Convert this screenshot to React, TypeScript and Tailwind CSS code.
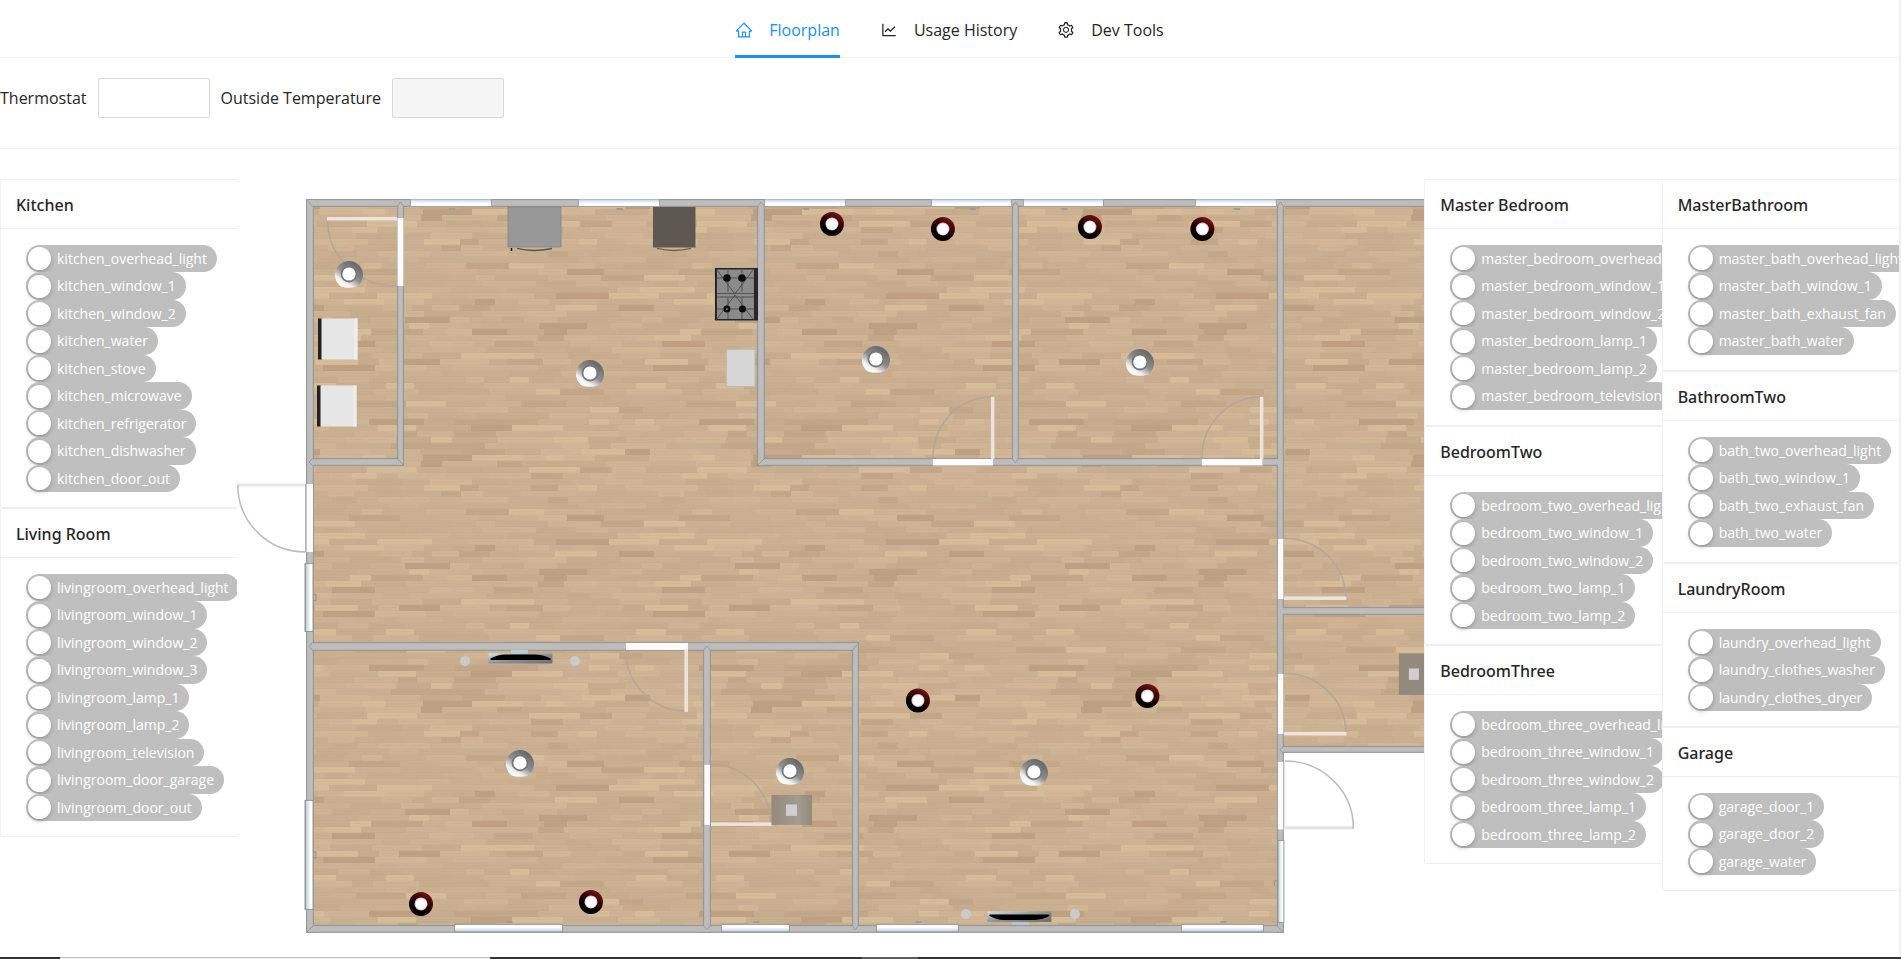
import { useState } from "react";
import { AiOutlineHome, AiOutlineLineChart, AiOutlineSetting } from "react-icons/ai";

type Room = { name: string; devices: string[] };

const leftRooms: Room[] = [
  {
    name: "Kitchen",
    devices: [
      "kitchen_overhead_light",
      "kitchen_window_1",
      "kitchen_window_2",
      "kitchen_water",
      "kitchen_stove",
      "kitchen_microwave",
      "kitchen_refrigerator",
      "kitchen_dishwasher",
      "kitchen_door_out",
    ],
  },
  {
    name: "Living Room",
    devices: [
      "livingroom_overhead_light",
      "livingroom_window_1",
      "livingroom_window_2",
      "livingroom_window_3",
      "livingroom_lamp_1",
      "livingroom_lamp_2",
      "livingroom_television",
      "livingroom_door_garage",
      "livingroom_door_out",
    ],
  },
];

const bedrooms: Room[] = [
  {
    name: "Master Bedroom",
    devices: [
      "master_bedroom_overhead_light",
      "master_bedroom_window_1",
      "master_bedroom_window_2",
      "master_bedroom_lamp_1",
      "master_bedroom_lamp_2",
      "master_bedroom_television",
    ],
  },
  {
    name: "BedroomTwo",
    devices: [
      "bedroom_two_overhead_light",
      "bedroom_two_window_1",
      "bedroom_two_window_2",
      "bedroom_two_lamp_1",
      "bedroom_two_lamp_2",
    ],
  },
  {
    name: "BedroomThree",
    devices: [
      "bedroom_three_overhead_light",
      "bedroom_three_window_1",
      "bedroom_three_window_2",
      "bedroom_three_lamp_1",
      "bedroom_three_lamp_2",
    ],
  },
];

const otherRooms: Room[] = [
  {
    name: "MasterBathroom",
    devices: [
      "master_bath_overhead_light",
      "master_bath_window_1",
      "master_bath_exhaust_fan",
      "master_bath_water",
    ],
  },
  {
    name: "BathroomTwo",
    devices: [
      "bath_two_overhead_light",
      "bath_two_window_1",
      "bath_two_exhaust_fan",
      "bath_two_water",
    ],
  },
  {
    name: "LaundryRoom",
    devices: ["laundry_overhead_light", "laundry_clothes_washer", "laundry_clothes_dryer"],
  },
  { name: "Garage", devices: ["garage_door_1", "garage_door_2", "garage_water"] },
];

function DeviceSwitch({ name }: { name: string }) {
  const [on, setOn] = useState(false);
  return (
    <li className="flex odd:h-[27px] even:h-7">
      <button
        type="button"
        role="switch"
        aria-checked={on}
        onClick={() => setOn(!on)}
        className={
          on
            ? "flex h-full shrink-0 items-center gap-[6px] rounded-full bg-[#1890ff] pr-[10px] pl-[2px] text-[14px] leading-5 whitespace-nowrap text-white"
            : "flex h-full shrink-0 items-center gap-[6px] rounded-full bg-[#bfbfbf] pr-[10px] pl-[2px] text-[14px] leading-5 whitespace-nowrap text-white"
        }
      >
        <span className="size-[23px] rounded-full bg-white shadow-[0_2px_4px_rgba(0,35,11,0.25)]" />
        {name}
      </button>
    </li>
  );
}

function RoomColumn({ rooms }: { rooms: Room[] }) {
  return (
    <div className="min-w-0 overflow-hidden">
      {rooms.map((room) => (
        <section
          key={room.name}
          className="rounded-l-xs border-y border-l border-[#f0f0f0] bg-white"
        >
          <h2 className="flex h-[49px] items-center border-b border-[#f0f0f0] px-[15px] pt-[2px] font-['Noto_Sans','Open_Sans',sans-serif] text-[16px] font-medium">
            {room.name}
          </h2>
          <ul className="pt-4 pb-[15px] pl-[25px]">
            {room.devices.map((device) => (
              <DeviceSwitch key={device} name={device} />
            ))}
          </ul>
        </section>
      ))}
    </div>
  );
}

type Plank = { x: number; y: number; w: number; color: string };

const TILE_W = 330;
const TILE_H = 246;

function layPlanks(): Plank[] {
  const tones = [
    "#ceb395", "#cab092", "#c7ac8e", "#ccb193", "#c8ad8e", "#d0b596", "#c2a788",
    "#cbb092", "#d6bc99", "#c9ae90", "#cdb394", "#bda182", "#d2b797", "#caaf91",
  ];
  const planks: Plank[] = [];
  let seed = 4127;
  const next = () => {
    seed = (seed * 16807) % 2147483647;
    return seed / 2147483647;
  };
  for (let y = 0; y < TILE_H; y += 6) {
    const start = Math.floor(next() * TILE_W);
    let laid = 0;
    while (laid < TILE_W) {
      let w = 18 + Math.floor(next() * 38);
      if (TILE_W - laid - w < 18) w = TILE_W - laid;
      const x = (start + laid) % TILE_W;
      const color = tones[Math.floor(next() * tones.length)];
      planks.push({ x, y, w, color });
      if (x + w > TILE_W) planks.push({ x: x - TILE_W, y, w, color });
      laid += w;
    }
  }
  return planks;
}

const planks = layPlanks();

type Box = [x: number, y: number, w: number, h: number];

const floors: Box[] = [
  [310, 203, 971, 726],
  [1281, 203, 160, 546],
];

const walls: Box[] = [
  [306, 199, 1130, 8],
  [306, 199, 8, 734],
  [306, 925, 978, 8],
  [1277, 199, 7, 734],
  [397, 199, 7, 267],
  [306, 458, 98, 8],
  [757, 199, 8, 267],
  [1012, 199, 7, 267],
  [757, 458, 527, 8],
  [306, 642, 553, 9],
  [703, 642, 8, 291],
  [852, 642, 7, 291],
  [1277, 607, 160, 8],
  [1277, 746, 160, 7],
];

const topWindows = [
  [410, 82], [578, 82], [764, 82], [931, 81], [1023, 81], [1195, 82],
];
const bottomWindows = [
  [454, 109], [721, 69], [876, 83], [1181, 83],
];

const doorways: Box[] = [
  [397.5, 218, 6, 68],
  [306.5, 484, 6.5, 68],
  [933, 459, 60, 6.5],
  [1202, 459, 60.5, 6.5],
  [626, 643, 62, 7],
  [704.5, 765, 5.5, 60],
  [1278, 539, 5.5, 60],
  [1278, 674, 5.5, 60],
  [1278, 762, 5.5, 67.5],
];

const leaves: Box[] = [
  [327, 217, 70, 3.5],
  [991, 397, 3.5, 62],
  [1260, 397, 3.5, 62],
  [684.5, 650, 3.5, 62],
  [711, 822.5, 61, 3.5],
  [1284, 596.5, 62.5, 3.5],
  [1284, 732, 62.5, 3.5],
];

const arcs = [
  "M327.5 221A69 66 0 0 0 397 286",
  "M933 458A59 61 0 0 1 991 397",
  "M1202 458A59 61 0 0 1 1260 397",
  "M626 651A60 60 0 0 0 685 711",
  "M711 764.5A60 60 0 0 1 771 823",
  "M1285 538.5A61 60 0 0 1 1346 597",
  "M1285 673.5A61 60 0 0 1 1346 732",
];

const outerArcs = ["M237.8 485A67 67 0 0 0 305 552", "M1285 761A68.5 67 0 0 1 1353.5 829"];

const ceilingLights = [
  [349, 274], [590, 373], [876, 359], [1140, 362], [520, 763], [790, 771], [1034, 772],
];

const lamps = [
  [832, 224], [943, 229], [1090, 227], [1202.5, 229],
  [918, 700.5], [1147.5, 696], [421, 904], [591, 902],
];

const speakers = [[465, 661], [575, 661], [966, 914], [1075, 914]];

function Floorplan() {
  return (
    <svg viewBox="237 179 1187 770" className="block h-auto w-full" role="img" aria-label="Floorplan">
      <defs>
        <pattern id="wood" x="310" y="203" width={TILE_W} height={TILE_H} patternUnits="userSpaceOnUse">
          <rect width={TILE_W} height={TILE_H} fill="#cab092" />
          {planks.map((p) => (
            <g key={`${p.x}-${p.y}`}>
              <rect x={p.x} y={p.y} width={p.w} height={6} fill={p.color} />
              <rect x={p.x + 3} y={p.y + 2} width={p.w * 0.7} height={1} fill="#a98a68" opacity={0.07} />
              <rect x={p.x} y={p.y + 5} width={p.w} height={1} fill="#a98a68" opacity={0.08} />
            </g>
          ))}
        </pattern>
        <linearGradient id="ceiling" x1="0.75" y1="0.1" x2="0.2" y2="0.9">
          <stop offset="0" stopColor="#686868" />
          <stop offset="0.5" stopColor="#8f8f8f" />
          <stop offset="0.82" stopColor="#f0f0f0" />
          <stop offset="1" stopColor="#ffffff" />
        </linearGradient>
        <linearGradient id="shade" x1="0.7" y1="0.1" x2="0.35" y2="0.75">
          <stop offset="0" stopColor="#6b1012" />
          <stop offset="0.5" stopColor="#2c0506" />
          <stop offset="1" stopColor="#000000" />
        </linearGradient>
        <linearGradient id="glassDown" x1="0" y1="0" x2="0" y2="1">
          <stop offset="0" stopColor="#bcd7e0" />
          <stop offset="0.6" stopColor="#ffffff" />
        </linearGradient>
        <linearGradient id="glassUp" x1="0" y1="1" x2="0" y2="0">
          <stop offset="0" stopColor="#bcd3dc" />
          <stop offset="0.6" stopColor="#ffffff" />
        </linearGradient>
        <linearGradient id="glassSide" x1="0" y1="0" x2="1" y2="0">
          <stop offset="0" stopColor="#bcd3dc" />
          <stop offset="0.7" stopColor="#ffffff" />
        </linearGradient>
        <linearGradient id="metal" x1="0" y1="0" x2="1" y2="1">
          <stop offset="0" stopColor="#d5e0e6" />
          <stop offset="0.5" stopColor="#8d9296" />
          <stop offset="1" stopColor="#6b6b6b" />
        </linearGradient>
        <linearGradient id="basin" x1="0" y1="0" x2="1" y2="0">
          <stop offset="0" stopColor="#95897c" />
          <stop offset="0.65" stopColor="#a39c92" />
          <stop offset="1" stopColor="#94887b" />
        </linearGradient>
      </defs>

      {floors.map(([x, y, w, h]) => (
        <rect key={`${x}-${y}`} x={x} y={y} width={w} height={h} fill="url(#wood)" />
      ))}

      <g fill="#989898">
        {walls.map(([x, y, w, h]) => (
          <rect key={`${x}-${y}-${w}`} x={x} y={y} width={w} height={h} />
        ))}
      </g>
      <g fill="#bdbdbd">
        {walls.map(([x, y, w, h]) => (
          <rect key={`${x}-${y}-${w}`} x={x + 1.2} y={y + 1.2} width={w - 2.4} height={h - 2.4} />
        ))}
      </g>
      <path
        d="M306 199l7 8M306 933l7-7M1284 933l-7-7M404 466l-7-8M757 466l8-8M859 642l-7 9M397 207l3.500-5 3.500 5M757 207l4-5 4 5M1012 207l3.500-5 3.500 5M1277 207l3.500-5 3.500 5M1012 458l3.500 5 3.500-5M313 458l-4 4 4 4M313 642l-4 4.500 4 4.500M703 651l4-5 4 5M703 925l4 5 4-5M852 925l3.500 5 3.500-5M1284 746l-4 4 4 4"
        fill="none"
        stroke="#999999"
        strokeWidth="1"
      />

      {topWindows.map(([x, w]) => (
        <g key={x}>
          <rect x={x} y={199} width={w} height={8} fill="#9fa3a5" />
          <rect x={x + 1} y={199.5} width={w - 2} height={6.5} fill="url(#glassDown)" />
          <path d={`M${x + w / 2 - 3} 208h7v2h-5z`} fill="#a39a90" />
        </g>
      ))}
      {bottomWindows.map(([x, w]) => (
        <g key={x}>
          <rect x={x} y={924} width={w} height={8.5} fill="#94989a" />
          <rect x={x + 1} y={925} width={w - 2} height={6.5} fill="url(#glassUp)" />
          <path d={`M${x + w / 2 - 3} 923h7v-2h-5z`} fill="#a39a90" />
        </g>
      ))}
      {[[563, 69], [800, 110]].map(([y, h]) => (
        <g key={y}>
          <rect x={304.5} y={y} width={9} height={h} fill="#94989a" />
          <rect x={306} y={y + 1} width={6.5} height={h - 2} fill="url(#glassSide)" />
          <path d={`M313 ${y + h / 2 - 3}h3v6h-3`} fill="none" stroke="#8f8f8f" />
        </g>
      ))}
      <rect x={1277} y={840} width={7.5} height={83} fill="#94989a" />
      <rect x={1278.5} y={841} width={5} height={81} fill="url(#glassSide)" />
      <path d="M1277 881h-2.500v5" fill="none" stroke="#8f8f8f" />

      {doorways.map(([x, y, w, h]) => (
        <rect key={`${x}-${y}`} x={x} y={y} width={w} height={h} fill="#fbfbfb" />
      ))}
      <path d="M305.500 484v68M1284 762v67" stroke="#b0b0b0" />
      <g fill="none" stroke="#b0a89e" strokeWidth="1.500">
        {arcs.map((d) => (
          <path key={d} d={d} />
        ))}
      </g>
      {leaves.map(([x, y, w, h]) => (
        <rect key={`${x}-${y}`} x={x} y={y} width={w} height={h} fill="#eae5df" />
      ))}
      <rect x={237} y={483.5} width={68} height={3} fill="#e8e8e8" />
      <rect x={1284} y={826.5} width={69.5} height={3} fill="#e3e3e3" />
      <g fill="none" stroke="#bcbcbc" strokeWidth="1.500">
        {outerArcs.map((d) => (
          <path key={d} d={d} />
        ))}
      </g>

      {/* refrigerator and microwave */}
      <rect x={508} y={207} width={53} height={40} fill="#989898" stroke="#858585" strokeWidth="0.800" />
      <path d="M511.500 248v3" stroke="#111111" strokeWidth="1.500" />
      <path d="M517 248.500q16 4 35 0" fill="none" stroke="#555555" strokeWidth="1.300" />
      <rect x={653} y={207} width={42.5} height={40.5} fill="#5d5852" />
      <path d="M657 248.500q17 4 34 0" fill="none" stroke="#6b625a" strokeWidth="1.300" />

      {/* stove */}
      <rect x={715} y={268} width={43} height={52.5} fill="#262626" />
      <rect x={717} y={269.5} width={37} height={49.5} fill="#8b8b8b" />
      <path
        d="M717 293.500h37M717 297h37M728 270v22M742 270v22M728 298v21M742 298v21M717 278h37M717 309h37M717 270l18 24 18-24M717 319l18-24 18 24"
        stroke="#4b4b4b"
        strokeWidth="0.900"
        fill="none"
      />
      <g fill="#0d0d0d">
        <circle cx={727} cy={278} r={3.8} />
        <circle cx={742} cy={278} r={3.8} />
        <circle cx={742.5} cy={309} r={3.5} />
        <circle cx={727} cy={309} r={3.5} />
      </g>
      <circle cx={727} cy={309} r={1} fill="#7a7a7a" />

      {/* dishwasher, washer and dryer */}
      <rect x={726.5} y={349.5} width={28.5} height={37} fill="#d6d6d6" stroke="#c0b8ae" strokeWidth="0.800" />
      <rect x={318} y={318.5} width={4} height={41} fill="#222222" />
      <rect x={321.5} y={318.5} width={36} height={41} fill="#e6e6e6" />
      <rect x={354} y={318.5} width={3.5} height={41} fill="#efede9" />
      <rect x={317} y={385.5} width={4} height={41} fill="#222222" />
      <rect x={320.5} y={385.5} width={36} height={41} fill="#e6e6e6" />
      <rect x={353} y={385.5} width={3.5} height={41} fill="#efede9" />

      {/* televisions */}
      <rect x={511} y={650} width={17} height={5} fill="#b9cbd4" />
      <rect x={488.5} y={653.5} width={64} height={10} fill="url(#metal)" />
      <path d="M490.500 660v-1.500q8-4 14-4h31q9 .5 15 4v1.500z" fill="#000000" />
      <rect x={1012} y={920} width={17} height={5} fill="#b9c3c9" />
      <rect x={987.5} y={911.5} width={64} height={10.5} fill="url(#metal)" />
      <path d="M989.500 914.500v1.500q8 4 14 4h31q9-.5 15-4v-1.500z" fill="#000000" />
      {speakers.map(([x, y]) => (
        <circle key={`${x}-${y}`} cx={x} cy={y} r={5} fill="#cbcbcb" />
      ))}

      {/* sinks */}
      <rect x={771.5} y={795} width={40.5} height={30} fill="url(#basin)" />
      <rect x={786} y={804.5} width={11} height={11.5} fill="#cfcfcf" />
      <rect x={1399} y={653.5} width={40} height={41.5} fill="#93897d" />
      <rect x={1409} y={668.5} width={10} height={11.5} fill="#cfcfcf" />

      {ceilingLights.map(([x, y]) => (
        <g key={`${x}-${y}`}>
          <path
            d={`M${x - 8} ${y + 12.5}A14 14 0 1 1 ${x + 8} ${y + 12.5}Q${x} ${y + 15} ${x - 8} ${y + 12.5}z`}
            fill="url(#ceiling)"
          />
          <circle cx={x} cy={y} r={7.5} fill="#ffffff" stroke="#777777" strokeWidth="1.800" />
        </g>
      ))}
      {lamps.map(([x, y]) => (
        <g key={`${x}-${y}`}>
          <circle cx={x} cy={y} r={12} fill="url(#shade)" />
          <circle cx={x} cy={y} r={6.5} fill="#d9c8c8" />
          <circle cx={x} cy={y} r={5.5} fill="#ffffff" />
        </g>
      ))}
    </svg>
  );
}

const tabs = [
  { label: "Floorplan", Icon: AiOutlineHome },
  { label: "Usage History", Icon: AiOutlineLineChart },
  { label: "Dev Tools", Icon: AiOutlineSetting },
];

export default function App() {
  return (
    <div className="flex min-h-screen flex-col bg-white font-['Open_Sans','Noto_Sans',sans-serif] text-[#262626]">
      <div className="grow border-r-2 border-[#f0f0f0]">
        <nav className="flex justify-center gap-10 border-b border-[#f0f0f0]">
          {tabs.map(({ label, Icon }, i) => (
            <a
              key={label}
              href="#"
              aria-current={i === 0 ? "page" : undefined}
              className={
                i === 0
                  ? "-mb-px flex h-[58px] items-center gap-4 border-b-3 border-[#1890ff] pt-1 text-[16px] text-[#1890ff]"
                  : "-mb-px flex h-[58px] items-center gap-4 border-b-3 border-transparent pt-1 text-[16px]"
              }
            >
              <Icon className="size-[18px]" />
              {label}
            </a>
          ))}
        </nav>

        <form className="flex items-center gap-[11px] border-b border-[#f0f0f0] pt-5 pb-[30px] text-[16px]">
          <label htmlFor="thermostat">Thermostat</label>
          <input
            id="thermostat"
            type="text"
            className="h-10 w-28 rounded-xs border border-[#d9d9d9] bg-white px-3"
          />
          <label htmlFor="outside">Outside Temperature</label>
          <input
            id="outside"
            type="text"
            disabled
            className="h-10 w-28 rounded-xs border border-[#d9d9d9] bg-[#f5f5f5] px-3"
          />
        </form>

        <main className="grid grid-cols-8 items-start pt-[30px]">
          <RoomColumn rooms={leftRooms} />
          <div className="col-span-5 min-w-0 overflow-hidden">
            <Floorplan />
          </div>
          <RoomColumn rooms={bedrooms} />
          <RoomColumn rooms={otherRooms} />
        </main>
      </div>

      <footer className="flex h-[2px] bg-[#333333]">
        <div className="ml-[60px] w-[430px] border-t border-[#bdbdbd] bg-[#f3f3f3]" />
        <div className="ml-[372px] w-14 bg-[#5c5f5c]" />
      </footer>
    </div>
  );
}
